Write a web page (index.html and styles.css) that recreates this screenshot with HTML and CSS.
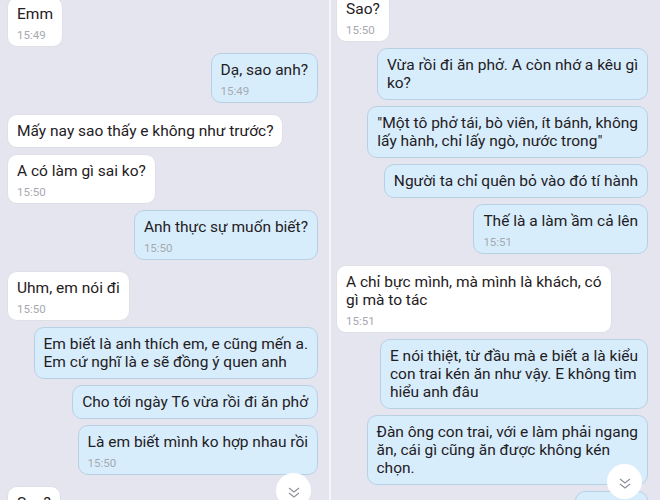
FILE: index.html
```html
<!DOCTYPE html>
<html lang="vi">
<head>
    <meta charset="UTF-8">
    <meta name="viewport" content="width=device-width, initial-scale=1.0">
    <title>Tin nhắn</title>
    <link rel="stylesheet" href="styles.css">
</head>
<body>
    <div class="screens">
        <section class="chat chat-left">
            <div class="thread">
                <div class="msg in"><p>Emm</p><time>15:49</time></div>
                <div class="msg out"><p>Dạ, sao anh?</p><time>15:49</time></div>
                <div class="msg in"><p>Mấy nay sao thấy e không như trước?</p></div>
                <div class="msg in"><p>A có làm gì sai ko?</p><time>15:50</time></div>
                <div class="msg out"><p>Anh thực sự muốn biết?</p><time>15:50</time></div>
                <div class="msg in"><p>Uhm, em nói đi</p><time>15:50</time></div>
                <div class="msg out"><p>Em biết là anh thích em, e cũng mến a.<br>Em cứ nghĩ là e sẽ đồng ý quen anh</p></div>
                <div class="msg out"><p>Cho tới ngày T6 vừa rồi đi ăn phở</p></div>
                <div class="msg out"><p>Là em biết mình ko hợp nhau rồi</p><time>15:50</time></div>
                <div class="msg in"><p>Sao?</p><time>15:50</time></div>
            </div>
            <button class="scroll-down" type="button">
                <svg width="12" height="11" viewBox="0 0 12 11"><polyline points="1,1 6,5 11,1"/><polyline points="1,6 6,10 11,6"/></svg>
            </button>
        </section>

        <div class="divider"></div>

        <section class="chat chat-right">
            <div class="thread">
                <div class="msg in"><p>Sao?</p><time>15:50</time></div>
                <div class="msg out"><p>Vừa rồi đi ăn phở. A còn nhớ a kêu gì<br>ko?</p></div>
                <div class="msg out"><p>"Một tô phở tái, bò viên, ít bánh, không<br>lấy hành, chỉ lấy ngò, nước trong"</p></div>
                <div class="msg out"><p>Người ta chỉ quên bỏ vào đó tí hành</p></div>
                <div class="msg out"><p>Thế là a làm ầm cả lên</p><time>15:51</time></div>
                <div class="msg in"><p>A chỉ bực mình, mà mình là khách, có<br>gì mà to tác</p><time>15:51</time></div>
                <div class="msg out"><p>E nói thiệt, từ đầu mà e biết a là kiểu<br>con trai kén ăn như vậy. E không tìm<br>hiểu anh đâu</p></div>
                <div class="msg out"><p>Đàn ông con trai, với e làm phải ngang<br>ăn, cái gì cũng ăn được không kén<br>chọn.</p></div>
                <div class="msg out msg-next"></div>
            </div>
            <button class="scroll-down" type="button">
                <svg width="12" height="11" viewBox="0 0 12 11"><polyline points="1,1 6,5 11,1"/><polyline points="1,6 6,10 11,6"/></svg>
            </button>
        </section>
    </div>
</body>
</html>
```

FILE: styles.css
```css
* {
    margin: 0;
    padding: 0;
    box-sizing: border-box;
}

body {
    width: 660px;
    height: 500px;
    overflow: hidden;
    background: #e4e5ef;
    font-family: Roboto, "Noto Sans", sans-serif;
    color: #1f2023;
}

.screens {
    display: flex;
    height: 500px;
}

.chat {
    position: relative;
    height: 500px;
    overflow: hidden;
    background: #e4e5ef;
}

.chat-left {
    width: 329px;
    padding: 0 11px 0 7px;
}

.chat-right {
    width: 329px;
    padding: 0 12px 0 5px;
}

.divider {
    width: 2px;
    background: #f6f6fa;
}

.thread {
    display: flex;
    flex-direction: column;
    align-items: flex-start;
    gap: 6px;
}

.chat-left .thread {
    margin-top: -3px;
}

.chat-right .thread {
    margin-top: -8px;
}

.msg {
    padding: 7px 9px;
    border-radius: 10px;
    font-size: 15.5px;
    line-height: 18px;
    white-space: nowrap;
}

.msg.in {
    background: #ffffff;
    border: 1px solid #dedfe7;
}

.msg.out {
    align-self: flex-end;
    background: #d8edfc;
    border: 1px solid #b9d0e4;
}

.msg.out + .msg.in {
    margin-top: 5px;
}

.msg-next {
    width: 73px;
    height: 34px;
}

.msg time {
    display: block;
    margin-top: 5px;
    margin-bottom: -3px;
    font-size: 11.5px;
    line-height: 14px;
    color: #a6a9b0;
}

.scroll-down {
    position: absolute;
    width: 35px;
    height: 35px;
    border: none;
    border-radius: 50%;
    background: #ffffff;
    display: flex;
    align-items: center;
    justify-content: center;
    padding-top: 3px;
}

.chat-left .scroll-down {
    left: 276px;
    top: 473px;
}

.chat-right .scroll-down {
    left: 276px;
    top: 464px;
}

.scroll-down polyline {
    fill: none;
    stroke: #8e9098;
    stroke-width: 1.2;
}
```
